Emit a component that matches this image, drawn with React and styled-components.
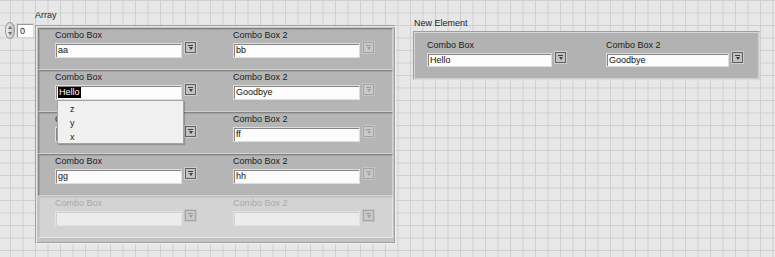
import React from "react";
import styled, { createGlobalStyle, css } from "styled-components";

const GlobalStyle = createGlobalStyle`
  html, body {
    margin: 0;
    padding: 0;
  }
  body {
    width: 775px;
    height: 257px;
    overflow: hidden;
    background-color: #e7e7e7;
    background-image:
      linear-gradient(to right, #cfcfcf 1px, transparent 1px),
      linear-gradient(to bottom, #cfcfcf 1px, transparent 1px);
    background-size: 12.5px 12.5px;
    background-position: 10px 0;
    font-family: "Liberation Sans", Arial, sans-serif;
    font-size: 9px;
    color: #1c1c1c;
  }
`;

const Page = styled.div`
  display: flex;
  align-items: flex-start;
  padding: 9px 0 0 5px;
`;

const ArrayGroup = styled.div`
  display: flex;
  align-items: flex-start;
  flex-shrink: 0;
`;

const IndexCtl = styled.div`
  display: flex;
  align-items: center;
  margin-top: 13px;
`;

const Spinner = styled.div`
  width: 10px;
  height: 17px;
  border-radius: 5px / 8px;
  background: linear-gradient(to right, #f2f2f2, #bdbdbd);
  border: 1px solid #9a9a9a;
  box-sizing: border-box;
  display: flex;
  flex-direction: column;
  align-items: center;
  justify-content: space-evenly;
`;

const Arrow = styled.div`
  width: 0;
  height: 0;
  border-left: 2.5px solid transparent;
  border-right: 2.5px solid transparent;
  ${(p) =>
    p.$up
      ? css`border-bottom: 3px solid #6a6a6a;`
      : css`border-top: 3px solid #6a6a6a;`}
`;

const IndexBox = styled.div`
  width: 18px;
  height: 15px;
  margin-left: 1px;
  box-sizing: border-box;
  background: #fdfdfd;
  border: 1px solid #d6d6d6;
  box-shadow: inset 1px 1px 0 #9a9a9a;
  padding-left: 3px;
  line-height: 14px;
`;

const Column = styled.div`
  display: flex;
  flex-direction: column;
  flex-shrink: 0;
  margin-left: ${(p) => p.$ml || 0}px;
  margin-top: ${(p) => p.$mt || 0}px;
`;

const Label = styled.div`
  line-height: 12px;
  height: 12px;
  white-space: nowrap;
  color: ${(p) => (p.$dim ? "#a9a9a9" : "#1c1c1c")};
  margin-bottom: ${(p) => p.$mb || 0}px;
  padding-left: ${(p) => p.$pl || 0}px;
`;

const ArrayFrame = styled.div`
  width: 361px;
  box-sizing: border-box;
  background: #c4c4c4;
  border: 1px solid;
  border-color: #a0a0a0 #f0f0f0 #f0f0f0 #a0a0a0;
  box-shadow: inset 1px 1px 0 #e8e8e8, inset -1px -1px 0 #a0a0a0;
  padding: 2px 2px 5px 2px;
  display: flex;
  flex-direction: column;
`;

const Element = styled.div`
  height: 42px;
  box-sizing: border-box;
  display: flex;
  padding-left: 16px;
  background: ${(p) => (p.$disabled ? "#d3d3d3" : "#b5b5b5")};
  border: 1px solid;
  border-color: ${(p) =>
    p.$disabled
      ? "#c0c0c0 #e4e4e4 #e4e4e4 #c0c0c0"
      : "#838383 #d2d2d2 #d2d2d2 #838383"};
  box-shadow: inset 1px 1px 0 ${(p) => (p.$disabled ? "#c8c8c8" : "#a2a2a2")};
`;

const Cluster = styled.div`
  width: 347px;
  height: 49px;
  box-sizing: border-box;
  display: flex;
  padding: 7px 0 0 13px;
  background: #b2b2b2;
  border: 1px solid;
  border-color: #9e9e9e #d8d8d8 #d8d8d8 #9e9e9e;
  box-shadow: inset 1px 1px 0 #d6d6d6, inset -1px -1px 0 #cfcfcf;
`;

const Field = styled.div`
  width: ${(p) => p.$w || 178}px;
  flex-shrink: 0;
  display: flex;
  flex-direction: column;
  position: relative;
`;

const InputRow = styled.div`
  display: flex;
  align-items: flex-start;
  margin-top: 2px;
`;

const TextBox = styled.div`
  width: ${(p) => p.$w || 127}px;
  height: ${(p) => p.$h || 15}px;
  box-sizing: border-box;
  background: ${(p) => (p.$disabled ? "#ececec" : "#fcfcfc")};
  border: 1px solid ${(p) => (p.$disabled ? "#e2e2e2" : "#dedede")};
  box-shadow: inset 1px 1px 0 ${(p) => (p.$disabled ? "#cfcfcf" : "#858585")};
  padding-left: 2px;
  line-height: ${(p) => (p.$h || 15) - 2}px;
  white-space: nowrap;
  color: #111;
`;

const Selected = styled.span`
  background: #000;
  color: #fff;
  padding: 0 1px;
  display: inline-block;
  line-height: 11px;
`;

const DropButton = styled.div`
  width: 11px;
  height: 11px;
  margin-left: 3px;
  margin-top: -1px;
  box-sizing: border-box;
  border: 1px solid ${(p) => (p.$dim ? "#a5a5a5" : "#5f5f5f")};
  outline: 1px solid ${(p) => (p.$dim ? "#c4c4c4" : "#cfcfcf")};
  background: ${(p) => (p.$dim ? "#c9c9c9" : "#c2c2c2")};
  display: flex;
  flex-direction: column;
  align-items: center;
  justify-content: center;
  gap: 1px;
`;

const DropBar = styled.div`
  width: 5px;
  height: 1px;
  background: ${(p) => (p.$dim ? "#9e9e9e" : "#3c3c3c")};
`;

const DropTri = styled.div`
  width: 0;
  height: 0;
  border-left: 2.5px solid transparent;
  border-right: 2.5px solid transparent;
  border-top: 3px solid ${(p) => (p.$dim ? "#9e9e9e" : "#3c3c3c")};
`;

const Menu = styled.div`
  position: absolute;
  left: 2px;
  top: 29px;
  width: 127px;
  height: 44px;
  box-sizing: border-box;
  background: #f0f0f0;
  border: 1px solid #a3a3a3;
  box-shadow: 1px 1px 1px rgba(0, 0, 0, 0.2);
  padding: 1px 0 0 12px;
  z-index: 2;
`;

const MenuItem = styled.div`
  line-height: 14px;
  color: #1c1c1c;
`;

const Combo = ({ label, value, dim, disabled, selected, menu, w, h, fw }) => (
  <Field $w={fw}>
    <Label $dim={disabled}>{label}</Label>
    <InputRow>
      <TextBox $disabled={disabled} $w={w} $h={h}>
        {selected ? <Selected>{value}</Selected> : value}
      </TextBox>
      <DropButton $dim={dim || disabled}>
        <DropBar $dim={dim || disabled} />
        <DropTri $dim={dim || disabled} />
      </DropButton>
    </InputRow>
    {menu && (
      <Menu>
        {menu.map((m) => (
          <MenuItem key={m}>{m}</MenuItem>
        ))}
      </Menu>
    )}
  </Field>
);

const rows = [
  { a: "aa", b: "bb" },
  { a: "Hello", b: "Goodbye", selected: true, menu: ["z", "y", "x"] },
  { a: "", b: "ff" },
  { a: "gg", b: "hh" },
];

export default function App() {
  return (
    <>
      <GlobalStyle />
      <Page>
        <ArrayGroup>
          <IndexCtl>
            <Spinner>
              <Arrow $up />
              <Arrow />
            </Spinner>
            <IndexBox>0</IndexBox>
          </IndexCtl>
          <Column $ml={1}>
            <Label $mb={4}>Array</Label>
            <ArrayFrame>
              {rows.map((r, i) => (
                <Element key={i}>
                  <Combo
                    label="Combo Box"
                    value={r.a}
                    selected={r.selected}
                    menu={r.menu}
                  />
                  <Combo label="Combo Box 2" value={r.b} dim />
                </Element>
              ))}
              <Element $disabled>
                <Combo label="Combo Box" value="" disabled />
                <Combo label="Combo Box 2" value="" disabled />
              </Element>
            </ArrayFrame>
          </Column>
        </ArrayGroup>
        <Column $ml={17} $mt={8}>
          <Label $mb={2} $pl={1}>New Element</Label>
          <Cluster>
            <Combo label="Combo Box" value="Hello" w={125} h={14} fw={179} />
            <Combo label="Combo Box 2" value="Goodbye" w={123} h={14} />
          </Cluster>
        </Column>
      </Page>
    </>
  );
}
